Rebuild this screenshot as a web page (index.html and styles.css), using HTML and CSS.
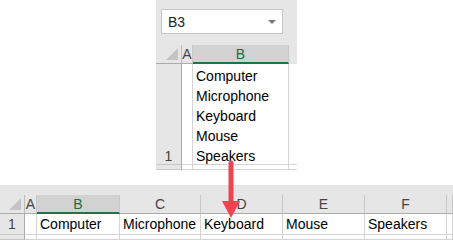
FILE: index.html
```html
<!DOCTYPE html>
<html>
<head>
<meta charset="utf-8">
<link rel="stylesheet" href="styles.css">
</head>
<body>
<div class="page">
  <div class="top">
    <div class="namebar">
      <div class="namebox"><span class="ref">B3</span><span class="drop"></span></div>
    </div>
    <div class="grid grid-top">
      <div class="corner"><span class="tri"></span></div>
      <div class="ch">A</div>
      <div class="ch sel">B</div>
      <div class="pad"></div>

      <div class="rh tall"><div class="lines">1</div></div>
      <div class="cell"></div>
      <div class="cell wrap"><div class="lines">Computer<br>Microphone<br>Keyboard<br>Mouse<br>Speakers</div></div>
      <div class="cell blank"></div>

      <div class="rh"></div>
      <div class="cell"></div>
      <div class="cell"></div>
      <div class="cell blank"></div>
    </div>
  </div>

  <div class="bottom">
    <div class="grid grid-bottom">
      <div class="corner"><span class="tri"></span></div>
      <div class="ch">A</div>
      <div class="ch sel">B</div>
      <div class="ch">C</div>
      <div class="ch">D</div>
      <div class="ch">E</div>
      <div class="ch">F</div>
      <div class="ch"></div>

      <div class="rh">1</div>
      <div class="cell"></div>
      <div class="cell">Computer</div>
      <div class="cell">Microphone</div>
      <div class="cell">Keyboard</div>
      <div class="cell">Mouse</div>
      <div class="cell">Speakers</div>
      <div class="cell"></div>

      <div class="rh"></div>
      <div class="cell"></div>
      <div class="cell"></div>
      <div class="cell"></div>
      <div class="cell"></div>
      <div class="cell"></div>
      <div class="cell"></div>
      <div class="cell"></div>
    </div>
  </div>

  <svg class="arrow" width="20" height="60" viewBox="0 0 20 60">
    <line x1="10" y1="3" x2="10" y2="42" stroke="#ee4450" stroke-width="5" stroke-linecap="round"/>
    <polygon points="1,41 19,41 10,58" fill="#ee4450"/>
  </svg>
</div>
</body>
</html>
```

FILE: styles.css
```css
* { box-sizing: border-box; }
html, body { margin: 0; padding: 0; background: #ffffff; }
body {
  width: 453px;
  height: 240px;
  overflow: hidden;
  font-family: "Liberation Sans", Arial, sans-serif;
  font-size: 14px;
  color: #000;
}
.page { position: relative; width: 453px; height: 240px; }

.top {
  margin-left: 156px;
  width: 141px;
  height: 170px;
  overflow: hidden;
}
.namebar {
  background: #e6e6e6;
  height: 45px;
  padding: 9px 14px 0 5px;
}
.namebox {
  height: 25px;
  background: #fff;
  border: 1px solid #c6c6c6;
  display: flex;
  align-items: center;
  justify-content: space-between;
  padding: 0 6px 0 6px;
}
.ref { color: #222; font-size: 14px; }
.drop {
  width: 0; height: 0;
  border-left: 4px solid transparent;
  border-right: 4px solid transparent;
  border-top: 4px solid #7a7a7a;
}

.grid { display: grid; }
.grid-top {
  grid-template-columns: 26px 11px 96px 8px;
  grid-template-rows: 19px 101px 5px;
}
.bottom {
  margin-top: 15px;
  background: #e6e6e6;
  padding-top: 10px;
  height: 55px;
}
.grid-bottom {
  grid-template-columns: 25px 12px 83px 81px 82px 82px 82px 1fr;
  grid-template-rows: 19px 21px 5px;
  background: #fff;
}

.corner {
  background: #e6e6e6;
  border-right: 1px solid #bcbcbc;
  border-bottom: 1px solid #ababab;
  position: relative;
}
.tri {
  position: absolute;
  right: 3px;
  bottom: 3px;
  width: 0; height: 0;
  border-left: 12px solid transparent;
  border-bottom: 12px solid #c4c4c4;
}
.ch {
  background: #e6e6e6;
  color: #444;
  text-align: center;
  line-height: 19px;
  border-right: 1px solid #c8c8c8;
  border-bottom: 1px solid #ababab;
}
.ch.sel {
  background: #d2d2d2;
  color: #1d6b3e;
  border-bottom: 2px solid #217346;
  line-height: 18px;
}
.pad { background: #e6e6e6; }

.rh {
  background: #e6e6e6;
  color: #444;
  text-align: center;
  border-right: 1px solid #ababab;
  border-bottom: 1px solid #c8c8c8;
  line-height: 21px;
}
.rh.tall {
  display: flex;
  align-items: flex-end;
  justify-content: center;
  line-height: 20px;
}
.lines { margin-bottom: -2px; }
.cell {
  background: #fff;
  border-right: 1px solid #d4d4d4;
  border-bottom: 1px solid #d4d4d4;
  padding-left: 3px;
  line-height: 21px;
  white-space: nowrap;
  overflow: hidden;
}
.cell.wrap {
  display: flex;
  align-items: flex-end;
  line-height: 20px;
}
.cell.blank { border-right: none; }

.arrow {
  position: absolute;
  left: 221px;
  top: 160px;
}
```
